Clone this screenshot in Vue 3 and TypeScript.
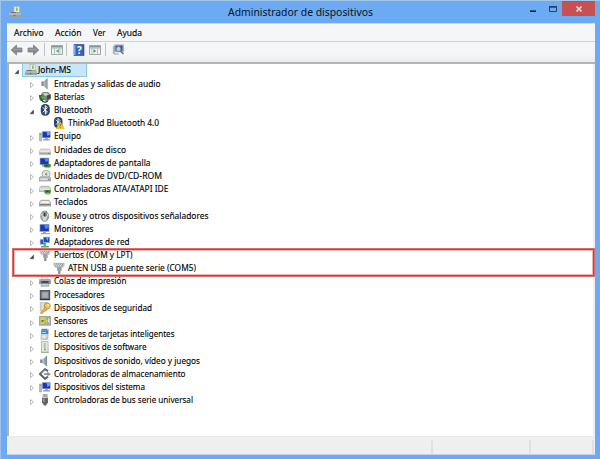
<script setup lang="ts">
interface Device {
  label: string
  icon: string
  width: number
  level: number
  open?: boolean
}

const menus = [
  { label: 'Archivo', width: 29.5 },
  { label: 'Acción', width: 26.5 },
  { label: 'Ver', width: 12.5 },
  { label: 'Ayuda', width: 25 },
]

const devices: Device[] = [
  { label: 'John-MS', icon: 'computer', width: 33, level: 0, open: true },
  { label: 'Entradas y salidas de audio', icon: 'audio', width: 106.5, level: 1 },
  { label: 'Baterías', icon: 'battery', width: 30.5, level: 1 },
  { label: 'Bluetooth', icon: 'bluetooth', width: 38, level: 1, open: true },
  { label: 'ThinkPad Bluetooth 4.0', icon: 'btwarn', width: 91, level: 2 },
  { label: 'Equipo', icon: 'pc', width: 27, level: 1 },
  { label: 'Unidades de disco', icon: 'disk', width: 72, level: 1 },
  { label: 'Adaptadores de pantalla', icon: 'display', width: 96.5, level: 1 },
  { label: 'Unidades de DVD/CD-ROM', icon: 'dvd', width: 108, level: 1 },
  { label: 'Controladoras ATA/ATAPI IDE', icon: 'ata', width: 114.5, level: 1 },
  { label: 'Teclados', icon: 'keyboard', width: 33.5, level: 1 },
  { label: 'Mouse y otros dispositivos señaladores', icon: 'mouse', width: 154.5, level: 1 },
  { label: 'Monitores', icon: 'monitor', width: 39.5, level: 1 },
  { label: 'Adaptadores de red', icon: 'network', width: 75.5, level: 1 },
  { label: 'Puertos (COM y LPT)', icon: 'port', width: 78.5, level: 1, open: true },
  { label: 'ATEN USB a puente serie (COM5)', icon: 'port', width: 128, level: 2 },
  { label: 'Colas de impresión', icon: 'printer', width: 72.5, level: 1 },
  { label: 'Procesadores', icon: 'cpu', width: 50.5, level: 1 },
  { label: 'Dispositivos de seguridad', icon: 'key', width: 98, level: 1 },
  { label: 'Sensores', icon: 'sensor', width: 33.5, level: 1 },
  { label: 'Lectores de tarjetas inteligentes', icon: 'card', width: 120.5, level: 1 },
  { label: 'Dispositivos de software', icon: 'software', width: 92.5, level: 1 },
  { label: 'Dispositivos de sonido, vídeo y juegos', icon: 'sound', width: 146, level: 1 },
  { label: 'Controladoras de almacenamiento', icon: 'storage', width: 131.5, level: 1 },
  { label: 'Dispositivos del sistema', icon: 'pc', width: 91, level: 1 },
  { label: 'Controladoras de bus serie universal', icon: 'usb', width: 139, level: 1 },
]
</script>

<template>
  <svg class="defs" width="0" height="0">
    <defs>
      <linearGradient id="cone" x1="0" y1="0" x2="1" y2="0"><stop offset="0" stop-color="#e0e4e6" /><stop offset="1" stop-color="#7b8b95" /></linearGradient>
    </defs>
    <symbol id="i-computer" viewBox="0 0 12 12">
      <rect x="5" y="0.5" width="5.5" height="6" fill="#e8ebe5" stroke="#b0b4ae" stroke-width=".6" /><rect x="7" y="1.5" width="1.7" height="3.5" fill="#83c06c" />
      <path d="M1.5 6h9.5l1 2v3H0V8z" fill="#9ca1a3" /><path d="M0 8h12" stroke="#c8cccd" /><path d="M2 6h5v1H2zM4.5 9h2v1h-2z" fill="#6c7478" />
    </symbol>
    <symbol id="i-audio" viewBox="0 0 12 12">
      <path d="M2.5 3.5h2L8.5 0v11.5L4.5 8h-2z" fill="url(#cone)" /><path d="M2.5 3.5h2V8h-2z" fill="#7f8588" /><path d="M8 1v10" stroke="#a5abad" stroke-width=".8" />
    </symbol>
    <symbol id="i-sound" viewBox="0 0 12 12">
      <path d="M1.2 4.5h2L8 .7v10.8L3.2 8h-2z" fill="url(#cone)" /><path d="M1.2 4.5h2v3.5h-2z" fill="#76858e" /><path d="M7.6 1.5v9.5" stroke="#71858f" stroke-width=".8" />
    </symbol>
    <symbol id="i-battery" viewBox="0 0 12 12">
      <path d="M2 3l2-2h5l3 3v4L8 10.5 3 8z" fill="#7e877c" /><path d="M4 2h4l2 2-4 1z" fill="#cdd3c7" />
      <path d="M8 4.5l3.5-1V7L8 9z" fill="#3d4a3c" /><path d="M0 4h3.5v1L5 6v2.5L3 10H2L.5 8.5V7L0 6z" fill="#2d6e2a" />
      <path d="M2 5l3 1v1.5L3 8z" fill="#55c33e" /><path d="M3 9c1 3 4 2.5 6 1" fill="none" stroke="#264b28" stroke-width="1.2" />
    </symbol>
    <symbol id="i-bluetooth" viewBox="0 0 12 12">
      <rect x="1.8" y="0" width="9" height="11.7" rx="4.3" fill="#29436f" /><path d="M3.8 3.3l4.6 4.8-2.1 2V1.6l2.1 2-4.6 4.7" fill="none" stroke="#fff" />
    </symbol>
    <symbol id="i-btwarn" viewBox="0 0 12 12">
      <rect x="1" y="0" width="8.5" height="11" rx="4" fill="#29436f" /><path d="M3 2.8l4 4-2 2V1.5l2 2-4 4" fill="none" stroke="#fff" stroke-width=".9" />
      <path d="M7.3 4.8l4.3 6.9H3z" fill="#f2c52d" stroke="#d4a214" stroke-width=".5" /><path d="M7.3 7.2v2M7.3 10v.8" stroke="#60501d" stroke-width=".8" />
    </symbol>
    <symbol id="i-pc" viewBox="0 0 12 12">
      <path d="M.5 3h2.2v8H.5z" fill="#babdb8" stroke="#92958f" stroke-width=".5" /><path d="M1 4h1v1H1z" fill="#50bd48" />
      <path d="M2.8 1h9v7.2h-9z" fill="#b9c3da" /><path d="M3.6 1.8h7.5v5.7H3.6z" fill="#1936bc" /><path d="M7.5 1.8h3.6v2.8L8.4 6z" fill="#7599ed" />
      <path d="M6 8.2h3v1H6zM4 9.2h7v1.4H4z" fill="#949ba5" />
    </symbol>
    <symbol id="i-disk" viewBox="0 0 12 12">
      <path d="M2 5h8l2 2.5v3.2H0V7.5z" fill="#e0e2e0" stroke="#a4a7a2" stroke-width=".6" /><path d="M.5 7.7h11v2.5H.5z" fill="#a8aba9" /><path d="M1 7.8h10" stroke="#f4f4f4" /><path d="M9 8.9h1.7v1H9z" fill="#3fa83a" />
    </symbol>
    <symbol id="i-display" viewBox="0 0 12 12">
      <path d="M.7.7h9.5V8H.7z" fill="#a8b4cd" /><path d="M1.3 1.3h8.2v6H1.3z" fill="#1b35b9" /><path d="M5.5 1.3h4v2.4L6.5 5z" fill="#5f86e2" /><path d="M3 8h3v1.5H3z" fill="#8c939f" />
      <path d="M5 7h6.7v3.3H5z" fill="#3a8646" /><path d="M6.5 8h2v1h-2z" fill="#203d25" /><path d="M6 10.7h4.5" stroke="#c4ad4b" />
    </symbol>
    <symbol id="i-dvd" viewBox="0 0 12 12">
      <circle cx="7" cy="4.2" r="4" fill="#e2e6e2" stroke="#979b98" stroke-width=".8" /><path d="M7 .3L8.7 4.4 7 8z" fill="#b8cdb7" /><circle cx="7" cy="4.2" r="1" fill="#7f8682" />
      <path d="M1 6.8l10 .2 1 1v3H0V8z" fill="#bdc0be" stroke="#868a88" stroke-width=".6" /><path d="M1.5 9.2h7" stroke="#f1f1f1" /><path d="M9 9h1.5v1H9z" fill="#40a93a" />
    </symbol>
    <symbol id="i-ata" viewBox="0 0 12 12">
      <path d="M2 3.3h8l2 2v3.2H0v-3z" fill="#d0d2d2" stroke="#999" stroke-width=".6" /><path d="M.8 6.1h10.5" stroke="#eee" /><path d="M5.5 7h6.2v3.5H5.5z" fill="#3b8a49" /><path d="M7.5 8h2v1h-2z" fill="#1c4728" /><path d="M6.5 11H11" stroke="#b19e42" />
    </symbol>
    <symbol id="i-keyboard" viewBox="0 0 12 12">
      <path d="M2 4.3h8L12 7v3H0V7z" fill="#c5c8c9" stroke="#8c9192" stroke-width=".7" /><path d="M2.4 5h7.2L11 7.3H1z" fill="#edf0f0" /><path d="M.4 8.6h11.2" stroke="#757c7e" stroke-width="1.2" />
    </symbol>
    <symbol id="i-mouse" viewBox="0 0 12 12">
      <ellipse cx="5.7" cy="6.2" rx="4" ry="5.2" fill="#d3d7d7" stroke="#848989" stroke-width=".8" /><path d="M4.2 1.2v5M7.2 1.2v5" fill="none" stroke="#5d6464" stroke-width=".9" /><path d="M2.2 6l1.3 4M9.2 6L7.9 10" stroke="#8a9090" /><path d="M5 2.5h1.5v4H5z" fill="#303838" />
    </symbol>
    <symbol id="i-monitor" viewBox="0 0 12 12">
      <path d="M.5 1h10v8H.5z" fill="#aeb9d3" /><path d="M1.2 1.7h8.6v6.5H1.2z" fill="#1c39bd" /><path d="M5 1.7h4.8v3L6.5 6z" fill="#5c82df" /><path d="M4 9h3v1H4zM2 10h9v1.2H2z" fill="#a1a6ab" />
    </symbol>
    <symbol id="i-network" viewBox="0 0 12 12">
      <path d="M.8 3h6.5v6H.8z" fill="#b1c5e1" /><path d="M1.5 3.7h5v4.2h-5z" fill="#2956be" /><path d="M4 .7h7v6.5H4z" fill="#a8c4e4" /><path d="M4.7 1.4h5.6v4.8H4.7z" fill="#2449b4" /><path d="M7 1.5h2.5L8.5 5z" fill="#71b7ec" /><path d="M4.8 8h2v2h3v1.5H2V10h2.8z" fill="#4cb35c" />
    </symbol>
    <symbol id="i-port" viewBox="0 0 12 12">
      <path d="M.3 .8h11.4v3L9.8 6H8.8v3H4V6H2.7L.6 4z" fill="#c4cbce" /><path d="M1.2 1.3h9.6L9.5 4.5h-7z" fill="#9ca5aa" /><path d="M2 2.2h8M3 3.7h6" stroke="#e5e9ec" stroke-width=".9" stroke-dasharray="1 1" /><path d="M4.2 5h4.2v3.5H4.2z" fill="#98a3a9" /><path d="M5.2 8.5h2.2V12H5.2z" fill="#828d93" />
    </symbol>
    <symbol id="i-printer" viewBox="0 0 12 12">
      <path d="M3 1.5h6V5H3z" fill="#e6e8ea" stroke="#9ca0a4" stroke-width=".6" /><path d="M.5 4h11L12 9H0z" fill="#8a9095" /><path d="M.5 5h11" stroke="#bcc0c3" /><path d="M2.5 6h7v2h-7z" fill="#444a50" /><path d="M2.5 8.5h7l.5 2.7H2z" fill="#bcd0df" stroke="#798289" stroke-width=".6" />
    </symbol>
    <symbol id="i-cpu" viewBox="0 0 12 12">
      <path d="M.8 1h10.4v10H.8z" fill="#585e60" /><path d="M1 10.7h10" fill="none" stroke="#282e30" /><path d="M2.7 2.8h6.7v6.4H2.7z" fill="#a7aeb1" stroke="#7b8183" stroke-width=".7" />
    </symbol>
    <symbol id="i-key" viewBox="0 0 12 12">
      <path d="M1.3 0h6.5v8.8H1.3z" fill="#d9ddd8" stroke="#a6aaa4" stroke-width=".6" /><circle cx="8.3" cy="4" r="3" fill="#f5c758" stroke="#b6832a" stroke-width=".8" /><circle cx="9.2" cy="3" r=".9" fill="#fff3c6" /><path d="M6.5 5.5L1.5 10.4 2.3 12l1.8-1 .3-1.3 1.2-.2L8 7z" fill="#eab445" stroke="#b6832a" stroke-width=".6" />
    </symbol>
    <symbol id="i-sensor" viewBox="0 0 12 12">
      <path d="M.3 1.5h11.4v8.7H.3z" fill="#a8ada6" stroke="#818680" stroke-width=".6" /><path d="M1.3 2.5h6v6.5h-6z" fill="#d1d35a" /><path d="M2.5 5h2v2h-2z" fill="#527d3c" /><path d="M8.3 2.5L5 5.7h2L5.5 9l4-4h-2z" fill="#f1e85c" stroke="#718a38" stroke-width=".4" /><path d="M9 3.5h1.5v4H9z" fill="#dce1dc" />
    </symbol>
    <symbol id="i-card" viewBox="0 0 12 12">
      <path d="M2.5 1h6.8l-.5 10.8H2z" fill="#cbd1d5" stroke="#9ea5aa" stroke-width=".6" /><path d="M2.4 2.3h6.8v3.8H2.2z" fill="#338cdd" /><path d="M3 1h5v1H3z" fill="#73787c" /><path d="M3 4.5h4" stroke="#a7d9fa" /><path d="M3.4 7.5h3v2h-3z" fill="#f4f5f5" />
    </symbol>
    <symbol id="i-software" viewBox="0 0 12 12">
      <path d="M2.5.5h6.6v10.8H2.5z" fill="#e6eae6" stroke="#a8ada8" stroke-width=".8" /><path d="M4.7 2h2v5h-2z" fill="#b8c0b8" /><path d="M5 7.5h2v1.8H5z" fill="#66ba50" /><path d="M2 11.3h8" stroke="#999e99" stroke-width=".8" />
    </symbol>
    <symbol id="i-storage" viewBox="0 0 12 12">
      <path d="M9 3.2L6 1.2 1 6l5 4.8 3-2.2" fill="none" stroke="#5d6366" stroke-width="2" /><path d="M8.3 3.6L12 6.2 8.5 8.3V6.9H5V5.3h3.3z" fill="#8c9296" /><path d="M6 1.7L2.3 5.2" stroke="#c3c7c9" stroke-width=".6" />
    </symbol>
    <symbol id="i-usb" viewBox="0 0 12 12">
      <path d="M4 .5h4.2v4H4z" fill="#d2d5d6" stroke="#8a8f91" stroke-width=".7" /><path d="M5 1.5h.8v1.2H5zM6.5 1.5h.8v1.2h-.8z" fill="#5a6062" /><path d="M3 4h6v4.5L7.3 11H4.8L3 8.5z" fill="#626769" /><path d="M4 4.5h1.5V8H4z" fill="#96999a" /><path d="M5.4 11h1.3v1H5.4z" fill="#777" />
    </symbol>
  </svg>

  <div class="window">
    <header class="titlebar">
      <svg class="appicon"><use href="#i-computer" /></svg>
      <svg class="title"><text x="0" y="14.4" textLength="145" lengthAdjust="spacingAndGlyphs">Administrador de dispositivos</text></svg>
      <div class="controls">
        <svg class="minmax" viewBox="0 0 32 15"><path d="M0 10.2h6" stroke="#111c2b" stroke-width="1.6" /><path d="M19.5 5.5h7v5h-7z" fill="none" stroke="#29405e" /><path d="M19 6h8" stroke="#29405e" stroke-width="1.5" /></svg>
        <div class="close"><svg viewBox="0 0 8 8"><path d="M1.5 1.5l5 5M6.5 1.5l-5 5" stroke="#f5e2e2" stroke-width="1.5" /></svg></div>
      </div>
    </header>
    <main class="client">
      <nav class="menu">
        <svg v-for="m in menus" :key="m.label" :style="{ width: m.width + 'px' }"><text x="0" y="10.6" :textLength="m.width" lengthAdjust="spacingAndGlyphs">{{ m.label }}</text></svg>
      </nav>
      <div class="toolbar">
        <svg class="arrow" viewBox="0 0 12 12"><path d="M.7 6L6 1v3h5.5v4H6v3z" fill="#878b8d" stroke="#7d8183" stroke-width=".8" /><path d="M3 5.3h8" stroke="#abb0b2" stroke-width=".7" /></svg>
        <svg class="arrow next" viewBox="0 0 12 12"><path d="M11.3 6L6 1v3H.5v4H6v3z" fill="#878b8d" stroke="#7d8183" stroke-width=".8" /><path d="M1 5.3h8" stroke="#abb0b2" stroke-width=".7" /></svg>
        <i class="sep" />
        <svg class="tool" viewBox="0 0 12 12"><path d="M.5 1.5h11v9H.5z" fill="#eef1ef" stroke="#8b969b" stroke-width=".8" /><path d="M.5 2h11v1.5H.5z" fill="#8797a2" /><path d="M3.5 4v6.5M8.8 4v6.5M1 4.2h10" stroke="#a3adb2" stroke-width=".7" /><path d="M7.7 5v4L5 7z" fill="#51a64a" /></svg>
        <i class="sep" />
        <svg class="tool help" viewBox="0 0 12 12"><path d="M1 .3h10v11.4H1z" fill="#3763b8" stroke="#254987" stroke-width=".6" /><path d="M1 1h1.5v10H1z" fill="#87aae1" /><text x="6.5" y="9.5" text-anchor="middle">?</text></svg>
        <svg class="tool" viewBox="0 0 12 12"><path d="M.5 1.5h11v9H.5z" fill="#eef1ef" stroke="#8b969b" stroke-width=".8" /><path d="M.5 2h11v1.5H.5z" fill="#8797a2" /><path d="M3 4v6.5M8.5 4v6.5M1 4.2h10" stroke="#a3adb2" stroke-width=".7" /><path d="M4.5 5v4L7.2 7z" fill="#51a64a" /></svg>
        <i class="sep" />
        <svg class="tool scan" viewBox="0 0 12 12"><path d="M.8 2h2v8h-2z" fill="#b2b7b7" /><path d="M2.5.8h9v7h-9z" fill="#b0bdd0" stroke="#8491a6" stroke-width=".5" /><path d="M3.5 1.7h7v5h-7z" fill="#344a9a" /><circle cx="6.5" cy="5" r="2.5" fill="#bdd4e2" stroke="#68798c" /><path d="M8.5 7l3 3" stroke="#65717b" stroke-width="1.5" /><path d="M2 10h5" stroke="#9aa2a8" /></svg>
      </div>
      <section class="tree">
        <div v-for="d in devices" :key="d.label" class="row" :class="'level' + d.level">
          <svg class="twisty" viewBox="0 0 6 8">
            <path v-if="d.open" d="M4.6 2v3.8H1z" fill="#444" stroke="#333" stroke-width=".4" />
            <path v-else-if="d.level === 1" d="M1.5 1.6v5L4.5 4.1z" fill="#fff" stroke="#aaa" stroke-width=".8" />
          </svg>
          <div class="item" :class="{ selected: d.level === 0 }">
            <svg class="icon"><use :href="'#i-' + d.icon" /></svg>
            <svg class="label" :style="{ width: d.width + 'px' }"><text x="0" y="8.7" :textLength="d.width" lengthAdjust="spacingAndGlyphs">{{ d.label }}</text></svg>
          </div>
        </div>
      </section>
      <footer class="status"><div /><div /><div /></footer>
    </main>
    <div class="highlight" />
  </div>
</template>

<style>
body { overflow: hidden; }
</style>

<style scoped>
* { box-sizing: border-box; }
svg { display: block; flex: none; }
.defs { position: absolute; }
.window { position: relative; width: 600px; height: 459px; padding: 0 5px 4px 6px; background: #6cabf3; border-top: 1px solid #a3c6e9; border-left: 1px solid #9ec2e9; font-family: "Noto Sans", "Open Sans", sans-serif; }
.titlebar { height: 22px; display: flex; align-items: flex-start; }
.appicon { width: 12px; height: 12px; margin: 5px 0 0 2px; }
.title { width: 150px; height: 20px; margin: 1px 0 0 207.4px; font-size: 11.3px; overflow: visible; }
.title text { fill: #071222; }
.controls { display: flex; margin-left: auto; }
.minmax { width: 32px; height: 15px; }
.close { width: 33px; height: 15px; display: flex; align-items: center; justify-content: center; background: #c75050; border-top: 1px solid #a85466; }
.close svg { width: 8px; height: 8px; }
.client { height: 432px; display: flex; flex-direction: column; background: #f0f0f0; border-top: 1px solid #cddded; }
.menu { height: 18px; display: flex; gap: 11.7px; padding: 1px 0 0 6.6px; background: #f5f6f7; border-bottom: 1px solid #cfd0d2; font-size: 9.4px; }
.menu svg { height: 16px; overflow: visible; }
.toolbar { height: 22px; display: flex; align-items: center; padding: 0 0 4px 3px; background: linear-gradient(#f5f6f7 60%, #e9eaea); border-bottom: 2px solid #b4b4b4; }
.arrow { width: 13px; height: 12px; }
.next { margin-left: 4px; }
.sep { width: 1px; height: 13px; background: #bfc2c4; margin: 0 6px 0 3.5px; }
.tool { width: 12px; height: 12px; }
.help { margin-right: 4px; }
.help text { font: bold 10px "Noto Sans", sans-serif; fill: #fff; }
.tree { height: 373px; padding-top: .4px; margin-right: 1px; background: #fff; border-left: 2px solid #b0b0b0; border-right: 1px solid #eee; }
.row { height: 13.2px; display: flex; align-items: center; }
.twisty { width: 6px; height: 8px; margin: 2px 4px 0 0; }
.level0 { padding-left: 5px; }
.level1 { padding-left: 20px; }
.level2 { padding-left: 34px; }
.level0 .twisty { margin-right: 2px; }
.item { display: flex; align-items: center; height: 13px; }
.selected { width: 64.5px; padding-left: 2px; background: #c8e6f5; border: 1px solid #83cbe9; border-top: 0; }
.icon { width: 12px; height: 12px; margin: 0 3.2px 1px 0; }
.level0 .icon { margin-right: .6px; }
.level2 .icon { margin-right: 3px; }
.label { height: 13px; font-size: 9.2px; overflow: visible; }
.label text, .menu text { fill: #000; stroke: #000; stroke-width: .12px; }
.status { height: 19px; display: grid; grid-template-columns: 426px 98px 63px; padding-top: 3px; background: #efefef; border-top: 1px solid #eaeaea; border-bottom: 1px solid #bfd5ec; }
.status div { border-right: 2px solid #e0e0e0; }
.highlight { position: absolute; left: 11px; top: 247px; width: 583px; height: 29px; border: 1px solid #dc6b6b; box-shadow: inset 0 0 0 1px #d03a3a, inset 0 0 0 2px #efb3b1; }
</style>
